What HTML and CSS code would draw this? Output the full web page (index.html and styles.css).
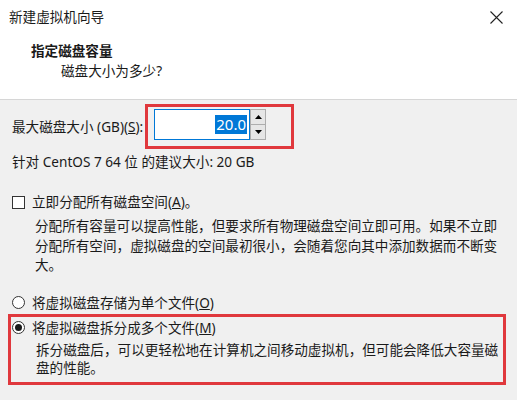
FILE: index.html
```html
<!DOCTYPE html>
<html lang="zh-CN">
<head>
  <meta charset="UTF-8">
  <title>新建虚拟机向导</title>
  <link rel="stylesheet" href="styles.css">
</head>
<body>
  <div class="dialog">
    <div class="dialog-top">
      <div class="titlebar">
        <span class="title">新建虚拟机向导</span>
        <span class="close">
          <svg width="13" height="13" viewBox="0 0 13 13"><path d="M0.5 0.5 L12.5 12.5 M12.5 0.5 L0.5 12.5" stroke="#222" stroke-width="1.1" fill="none"/></svg>
        </span>
      </div>
      <div class="intro">
        <div class="intro-title">指定磁盘容量</div>
        <div class="intro-sub">磁盘大小为多少?</div>
      </div>
    </div>

    <div class="content">
      <div class="size-row">
        <label class="size-label">最大磁盘大小 (GB)(<u>S</u>):</label>
        <div class="mark size-mark">
          <div class="spin-input"><span class="selected">20.0</span></div>
          <div class="spin-buttons">
            <div class="spin-btn">
              <svg width="7" height="4" viewBox="0 0 7 4"><path d="M3.5 0 L7 4 L0 4 Z" fill="#000"/></svg>
            </div>
            <div class="spin-btn">
              <svg width="7" height="4" viewBox="0 0 7 4"><path d="M0 0 L7 0 L3.5 4 Z" fill="#000"/></svg>
            </div>
          </div>
        </div>
      </div>
      <div class="hint">针对 CentOS 7 64 位 的建议大小: 20 GB</div>

      <div class="option check-option">
        <span class="checkbox"></span>
        <span>立即分配所有磁盘空间(<u>A</u>)。</span>
      </div>
      <p class="option-desc alloc-desc">分配所有容量可以提高性能，但要求所有物理磁盘空间立即可用。如果不立即<br>分配所有空间，虚拟磁盘的空间最初很小，会随着您向其中添加数据而不断变<br>大。</p>

      <div class="option single-option">
        <span class="radio"></span>
        <span>将虚拟磁盘存储为单个文件(<u>O</u>)</span>
      </div>
      <div class="mark split-mark">
        <div class="option">
          <span class="radio checked"></span>
          <span>将虚拟磁盘拆分成多个文件(<u>M</u>)</span>
        </div>
        <p class="option-desc split-desc">拆分磁盘后，可以更轻松地在计算机之间移动虚拟机，但可能会降低大容量磁<br>盘的性能。</p>
      </div>
    </div>
  </div>
</body>
</html>
```

FILE: styles.css
```css
body, html {
  margin: 0;
  padding: 0;
  background-color: #f0f0f0;
  font-family: "Noto Sans", "Noto Sans CJK SC", sans-serif;
  font-size: 13.6px;
  color: #1a1a1a;
}

.dialog {
  width: 517px;
  height: 400px;
  overflow: hidden;
}

.dialog-top {
  background-color: #ffffff;
  height: 99px;
  border-bottom: 1px solid #d6d6d6;
}

.titlebar {
  display: flex;
  justify-content: space-between;
  align-items: center;
  padding: 7px 14px 0 9px;
  height: 20px;
  line-height: 20px;
}

.close {
  display: flex;
}

.intro {
  margin-top: 14px;
  padding-left: 31px;
  line-height: 20px;
}

.intro-title {
  font-weight: bold;
}

.intro-sub {
  padding-left: 30px;
}

.content {
  padding-top: 4px;
}

.mark {
  border: 3px solid #e0383d;
}

.size-row {
  display: flex;
  align-items: center;
  padding-left: 12px;
}

.size-label {
  width: 133px;
  line-height: 20px;
}

.size-mark {
  display: flex;
  width: 137px;
  height: 37px;
  padding: 2px 0 0 6px;
  box-sizing: content-box;
}

.spin-input {
  width: 92px;
  height: 29px;
  border: 1px solid #0078d7;
  background-color: #ffffff;
  display: flex;
  align-items: center;
  justify-content: flex-end;
  padding-right: 2px;
  box-sizing: content-box;
}

.selected {
  background-color: #0078d7;
  color: #ffffff;
  font-size: 15px;
  line-height: 19px;
  padding: 0 1px;
}

.spin-buttons {
  display: flex;
  flex-direction: column;
  width: 16px;
  height: 31px;
}

.spin-btn {
  flex: 1;
  display: flex;
  align-items: center;
  justify-content: center;
  background-color: #e6e6e6;
  border: 1px solid #adadad;
}

.spin-btn + .spin-btn {
  border-top: none;
}

.hint {
  margin-top: 3px;
  padding-left: 12px;
  line-height: 20px;
}

.option {
  display: flex;
  align-items: center;
  gap: 7px;
  line-height: 20px;
}

.check-option {
  margin-top: 20px;
  padding-left: 12px;
}

.checkbox {
  width: 11px;
  height: 11px;
  border: 1px solid #333333;
  background-color: #ffffff;
}

.radio {
  width: 11px;
  height: 11px;
  border: 1px solid #333333;
  border-radius: 50%;
  background-color: #ffffff;
  display: flex;
  align-items: center;
  justify-content: center;
}

.radio.checked::after {
  content: "";
  width: 7px;
  height: 7px;
  border-radius: 50%;
  background-color: #1a1a1a;
}

.option-desc {
  margin: 0;
  white-space: nowrap;
}

.alloc-desc {
  margin-top: 4px;
  padding-left: 35px;
  line-height: 19.5px;
}

.single-option {
  margin-top: 18px;
  padding-left: 12px;
}

.split-mark {
  margin: 1px 0 0 8px;
  width: 491px;
  padding: 1px 0 5px 1px;
}

.split-desc {
  margin-top: 3px;
  padding-left: 24px;
  line-height: 18px;
}
```
